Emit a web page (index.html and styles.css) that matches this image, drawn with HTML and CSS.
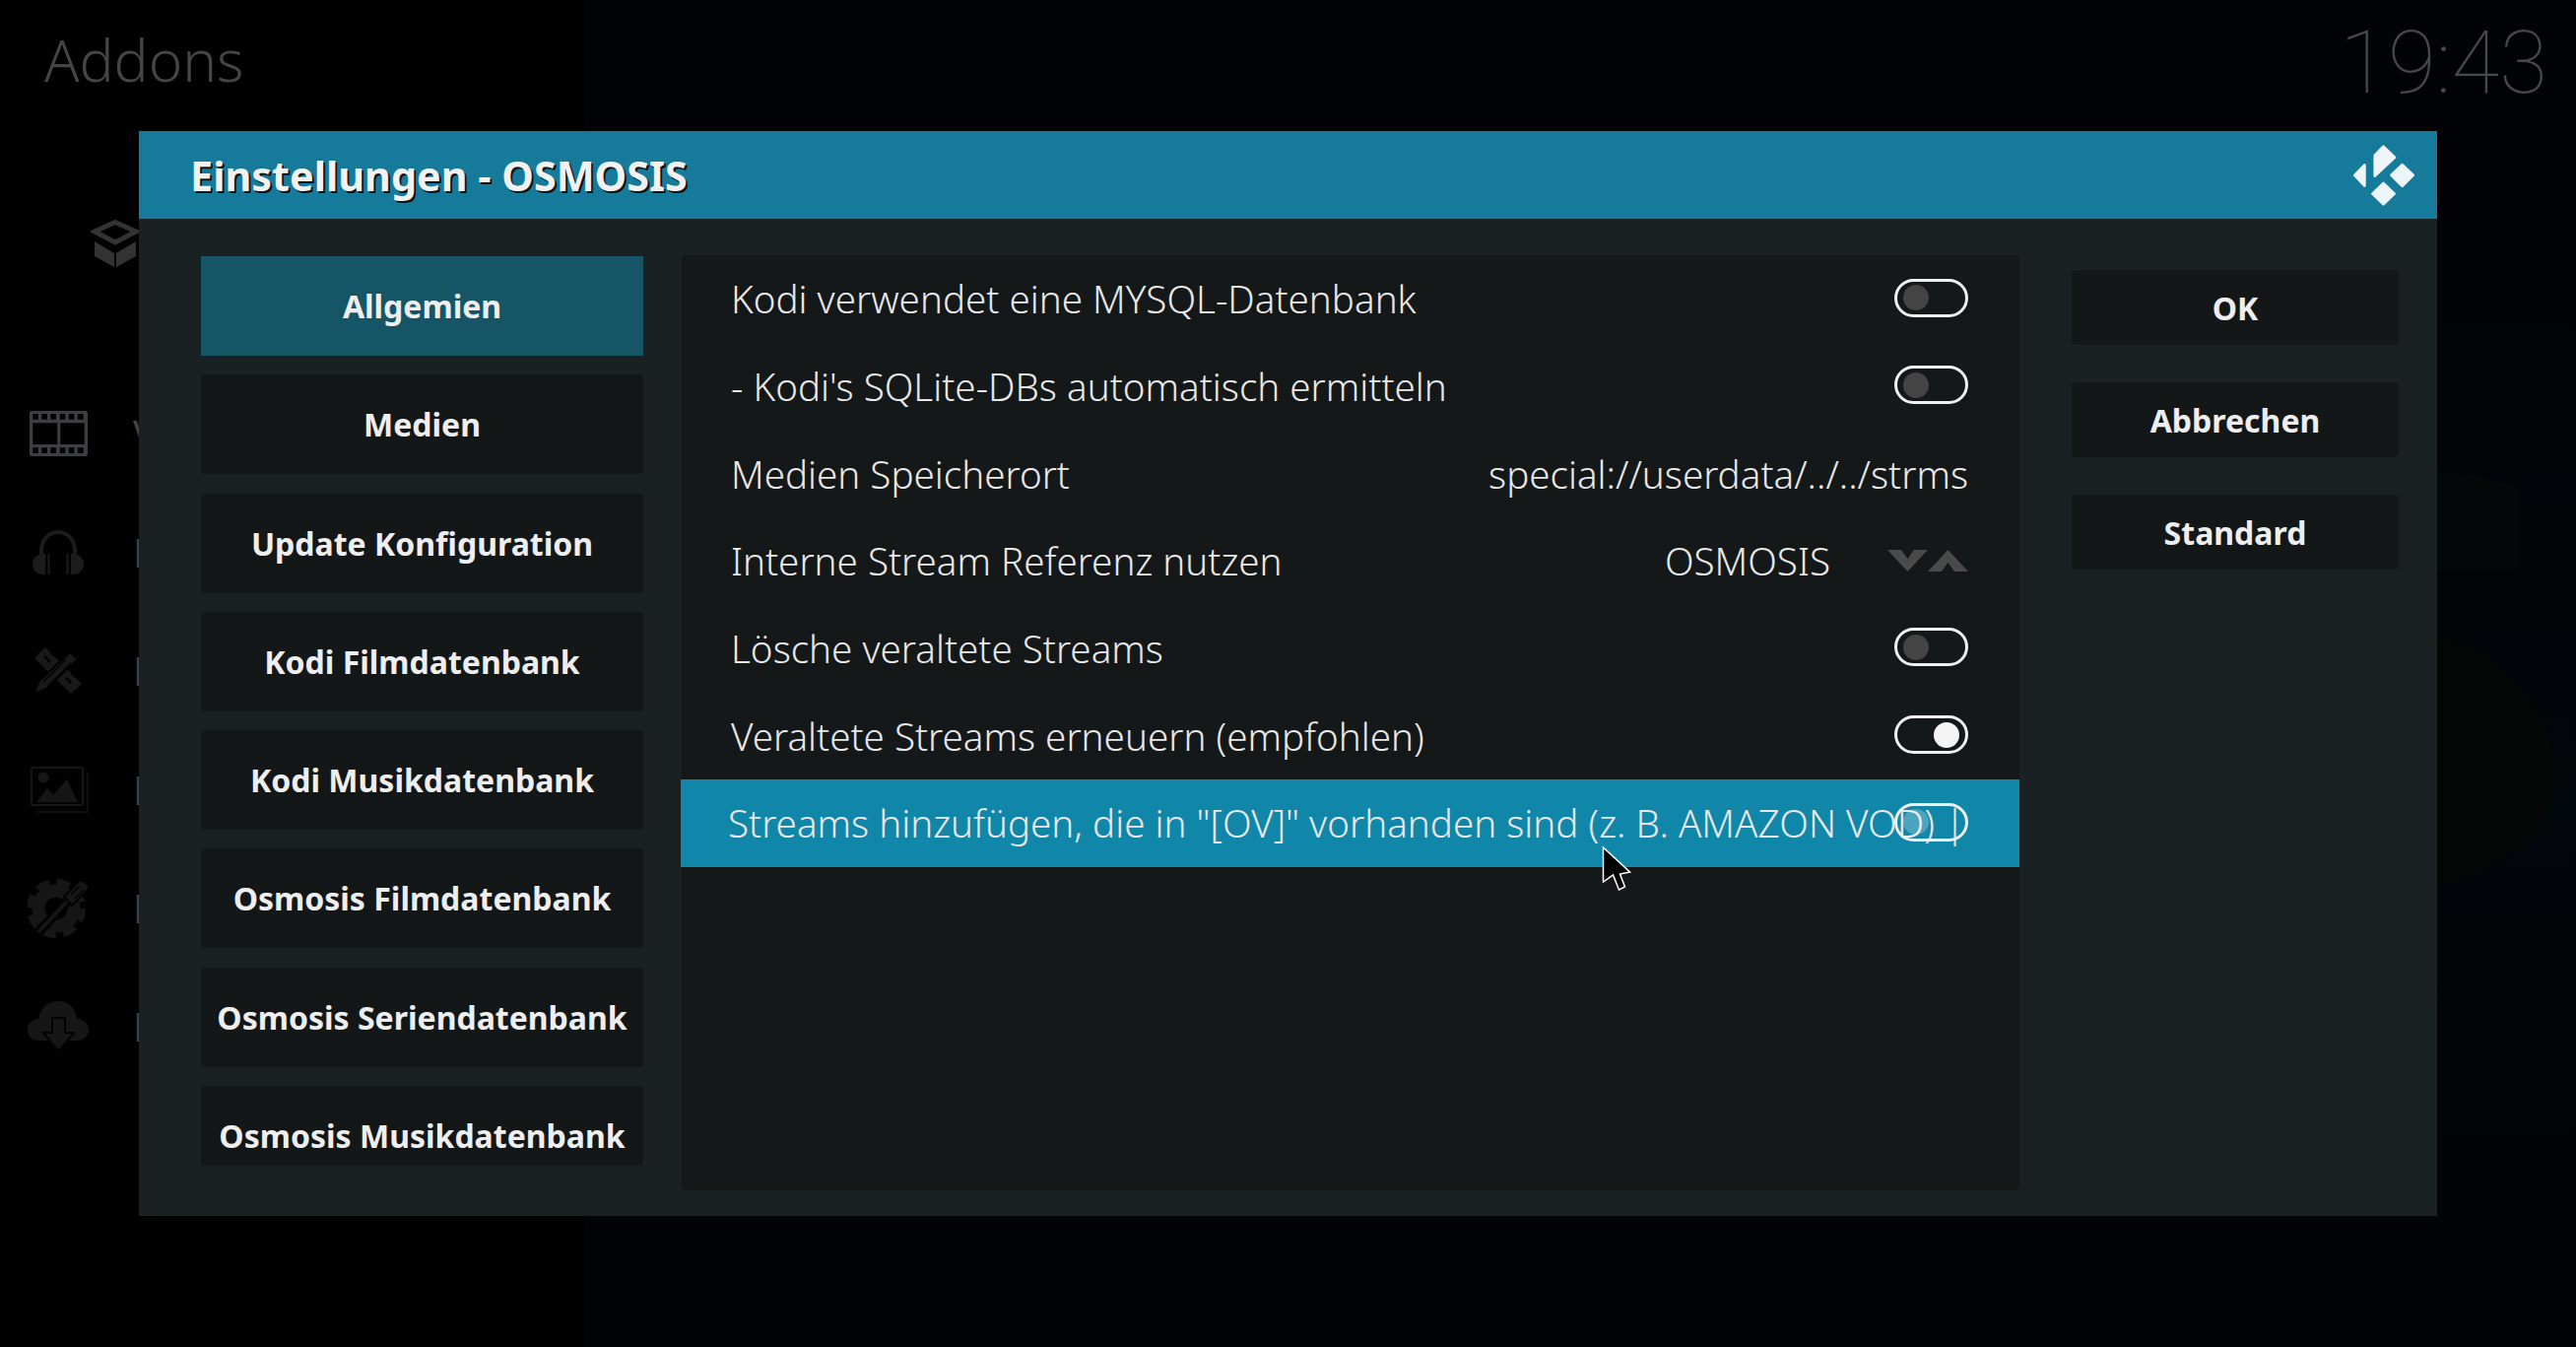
FILE: index.html
```html
<!DOCTYPE html>
<html lang="de">
<head>
    <meta charset="UTF-8">
    <meta name="viewport" content="width=device-width, initial-scale=1.0">
    <title>Einstellungen - OSMOSIS</title>
    <link rel="stylesheet" href="styles.css">
</head>
<body>
    <!-- Dimmed home screen behind the dialog -->
    <div class="home">
        <div class="home-side"></div>
        <div class="home-main">
            <svg class="home-art" width="141" height="520" viewBox="0 0 141 520">
                <path d="M0 0 C30 2 60 8 83 18 V100 H0 Z" fill="#050607"/>
                <path d="M0 170 C50 170 100 220 120 290 C130 340 90 400 0 420 Z" fill="#040505"/>
            </svg>
        </div>
        <div class="home-top">
            <div class="home-title">Addons</div>
            <div class="home-clock">19:43</div>
        </div>
        <svg class="box-icon" width="50" height="49" viewBox="0 0 50 49">
            <path d="M25 2.5 L46 12 L25 23 L4 12 Z" fill="none" stroke="#333" stroke-width="5"/>
            <path d="M4 22 L24 34 V48 L4 37 Z M46 22 L26 34 V48 L46 37 Z" fill="#333"/>
        </svg>
        <div class="home-menu">
            <div class="menu-row">
                <span class="menu-icon">
                    <svg class="icon-film" width="59" height="46" viewBox="0 0 59 46">
                        <path fill-rule="evenodd" fill="#3c3f40" d="M2 0 H57 Q59 0 59 2 V44 Q59 46 57 46 H2 Q0 46 0 44 V2 Q0 0 2 0 Z M3.3 3 V8.7 H9 V3 Z M12.3 3 V8.7 H18 V3 Z M21.3 3 V8.7 H27 V3 Z M30.7 3 V8.7 H36.4 V3 Z M39.7 3 V8.7 H45.4 V3 Z M49 3 V8.7 H54.7 V3 Z M3.3 12.3 V34 H28.3 V12.3 Z M31.3 12.3 V34 H55.7 V12.3 Z M3.3 37.3 V43 H9 V37.3 Z M12.3 37.3 V43 H18 V37.3 Z M21.3 37.3 V43 H27 V37.3 Z M30.7 37.3 V43 H36.4 V37.3 Z M39.7 37.3 V43 H45.4 V37.3 Z M49 37.3 V43 H54.7 V37.3 Z"/>
                    </svg>
                </span>
                <span class="menu-label">V</span>
            </div>
            <div class="menu-row">
                <span class="menu-icon">
                    <svg width="52" height="45" viewBox="0 0 52 45">
                        <path d="M9 28 V20 A17 18 0 0 1 43 20 V28" fill="none" stroke="#1c1c1c" stroke-width="4"/>
                        <path d="M10 24 C4 25 0 29 0 34 C0 40 4 45 11 45 H13 V24 Z M42 24 C48 25 52 29 52 34 C52 40 48 45 41 45 H39 V24 Z M15.5 24 H17.5 V45 H15.5 Z M34.5 24 H36.5 V45 H34.5 Z" fill="#1c1c1c"/>
                    </svg>
                </span>
                <span class="menu-label">M</span>
            </div>
            <div class="menu-row">
                <span class="menu-icon">
                    <svg width="49" height="48" viewBox="0 0 49 48">
                        <path d="M11 0 L48 37 L37 47 L0 11 Z" fill="#191919"/>
                        <path d="M10 9 L16 15 M17 5 L22 10 M32 31 L37 36 M38 26 L42 30" stroke="#020202" stroke-width="2.5"/>
                        <path d="M36 5 L44 12 L12 42 L0 47 L4 35 Z" fill="#191919" stroke="#020202" stroke-width="2"/>
                        <path d="M32 12 L9 35 M37 16 L14 39" stroke="#020202" stroke-width="1.5"/>
                    </svg>
                </span>
                <span class="menu-label">P</span>
            </div>
            <div class="menu-row">
                <span class="menu-icon icon-shift">
                    <svg width="59" height="47" viewBox="0 0 59 47">
                        <rect x="1" y="1" width="52" height="38" rx="1" fill="none" stroke="#161616" stroke-width="2"/>
                        <path d="M7 46 H58 V6" fill="none" stroke="#141414" stroke-width="1.5"/>
                        <circle cx="13" cy="11" r="5.5" fill="#161616"/>
                        <path d="M6 36 L17 22 L23 29 L37 13 L48 36 Z" fill="#161616"/>
                    </svg>
                </span>
                <span class="menu-label">B</span>
            </div>
            <div class="menu-row">
                <span class="menu-icon">
                    <svg width="62" height="61" viewBox="0 0 62 61">
                        <circle cx="29" cy="31" r="18" fill="none" stroke="#161616" stroke-width="13"/>
                        <circle cx="29" cy="31" r="26" fill="none" stroke="#161616" stroke-width="8" stroke-dasharray="13 7.4"/>
                        <path d="M11 55 L40 24" stroke="#030303" stroke-width="10"/>
                        <path d="M11 55 L40 24" stroke="#161616" stroke-width="4"/>
                        <path d="M37 19 L52 3 Q54 2 56 3 L62 8 Q63 10 61 12 L45 28 Z" fill="#161616" stroke="#030303" stroke-width="2"/>
                        <path d="M44 17 L53 8 M48 21 L57 12" stroke="#030303" stroke-width="1.5"/>
                    </svg>
                </span>
                <span class="menu-label">P</span>
            </div>
            <div class="menu-row">
                <span class="menu-icon">
                    <svg width="62" height="52" viewBox="0 0 62 52">
                        <path d="M11 40 C4 40 0 35 0 29 C0 23 5 18 11 18 C13 7 21 0 32 0 C42 0 49 8 50 18 C57 18 62 23 62 29 C62 35 57 40 50 40 Z" fill="#161616"/>
                        <path d="M25 17 H38 V32 H47 L31.5 51 L16 32 H25 Z" fill="#161616" stroke="#030303" stroke-width="2"/>
                    </svg>
                </span>
                <span class="menu-label">D</span>
            </div>
        </div>
    </div>

    <div class="dialog">
        <div class="dialog-header">
            <h1>Einstellungen - OSMOSIS</h1>
            <svg class="kodi-logo" width="62" height="62" viewBox="417 440 185 185">
                <g fill="#eef5f8" stroke="#eef5f8" stroke-width="8" stroke-linejoin="round">
                    <path d="M421 532 L451 501 V564 Z"/>
                    <path d="M482 472 L508 445 L542 478 L482 534 Z"/>
                    <path d="M565 500 L598 532 L565 565 L532 532 Z"/>
                    <path d="M508 556 L541 588 L508 620 L475 588 Z"/>
                </g>
            </svg>
        </div>
        <div class="dialog-body">
            <div class="categories">
                <div class="cat active">Allgemien</div>
                <div class="cat">Medien</div>
                <div class="cat">Update Konfiguration</div>
                <div class="cat">Kodi Filmdatenbank</div>
                <div class="cat">Kodi Musikdatenbank</div>
                <div class="cat">Osmosis Filmdatenbank</div>
                <div class="cat">Osmosis Seriendatenbank</div>
                <div class="cat">Osmosis Musikdatenbank</div>
            </div>
            <div class="settings">
                <div class="row">
                    <span class="row-label">Kodi verwendet eine MYSQL-Datenbank</span>
                    <span class="toggle"></span>
                </div>
                <div class="row">
                    <span class="row-label">- Kodi's SQLite-DBs automatisch ermitteln</span>
                    <span class="toggle"></span>
                </div>
                <div class="row">
                    <span class="row-label">Medien Speicherort</span>
                    <span class="row-value">special://userdata/../../strms</span>
                </div>
                <div class="row">
                    <span class="row-label">Interne Stream Referenz nutzen</span>
                    <span class="row-value">OSMOSIS</span>
                    <svg class="spinner" width="82" height="22" viewBox="0 0 82 22">
                        <path d="M0 0 H14 L20.5 9 L27 0 H41 L20.5 22 Z" fill="#4a4a4a"/>
                        <path d="M41 22 L61.5 0 L82 22 H68 L61.5 13 L55 22 Z" fill="#4a4a4a"/>
                    </svg>
                </div>
                <div class="row">
                    <span class="row-label">Lösche veraltete Streams</span>
                    <span class="toggle"></span>
                </div>
                <div class="row">
                    <span class="row-label">Veraltete Streams erneuern (empfohlen)</span>
                    <span class="toggle on"></span>
                </div>
                <div class="row selected">
                    <span class="row-label">Streams hinzufügen, die in "[OV]" vorhanden sind (z. B. AMAZON VOD) |</span>
                    <span class="toggle"></span>
                </div>
            </div>
            <div class="actions">
                <div class="action">OK</div>
                <div class="action">Abbrechen</div>
                <div class="action">Standard</div>
            </div>
        </div>
    </div>

    <svg class="cursor" width="30" height="46" viewBox="-1.5 -2 30 46">
        <path d="M0 0 L27 25 L17 27 L22 40 L16 43 L10 28 L0 35 Z" fill="#000" stroke="#fff" stroke-width="1.5"/>
    </svg>
</body>
</html>
```

FILE: styles.css
```css
html, body {
    margin: 0;
    padding: 0;
}

body {
    width: 2615px;
    height: 1367px;
    overflow: hidden;
    position: relative;
    background-color: #010204;
    font-family: "Noto Sans", "Open Sans", sans-serif;
}

/* home screen behind the dialog */
.home {
    position: absolute;
    inset: 0;
    overflow: hidden;
}

.home-side {
    position: absolute;
    left: 0;
    top: 0;
    bottom: 0;
    width: 594px;
    background-color: #010101;
}

.home-main {
    position: absolute;
    left: 594px;
    right: 0;
    top: 0;
    bottom: 0;
    background: linear-gradient(#010305, #01060a 60%, #010304);
}

.home-art {
    position: absolute;
    right: 0;
    top: 478px;
}

.home-top {
    position: relative;
    display: flex;
    justify-content: space-between;
    padding: 0 29px 0 45px;
    height: 133px;
}

.home-title {
    font-size: 58.5px;
    font-weight: 300;
    line-height: 120px;
    color: #454545;
}

.home-clock {
    font-family: Roboto, sans-serif;
    font-size: 89px;
    font-weight: 100;
    line-height: 128px;
    color: #484848;
}

.box-icon {
    position: absolute;
    left: 92px;
    top: 223px;
}

.home-menu {
    position: absolute;
    left: 0;
    top: 380px;
}

.menu-row {
    display: flex;
    align-items: center;
    height: 120.3px;
}

.menu-icon {
    width: 118px;
    margin-right: 17px;
    display: flex;
    justify-content: center;
    flex-shrink: 0;
}

.icon-shift {
    padding-left: 3px;
    width: 115px;
}

.menu-label {
    font-size: 40px;
    color: #444;
}

/* dialog */
.dialog {
    position: absolute;
    left: 141px;
    top: 133px;
    width: 2333px;
    height: 1101px;
    background-color: #1a2123;
}

.dialog-header {
    height: 89px;
    background-color: #167b9a;
    display: flex;
    align-items: center;
    justify-content: space-between;
    padding: 0 23px 0 52px;
}

.dialog-header h1 {
    margin: 0;
    font-size: 41.3px;
    font-weight: 700;
    color: #f2f2f2;
    text-shadow: 2px 2px 0 #111;
}

.kodi-logo {
    display: block;
}

.dialog-body {
    display: flex;
    align-items: flex-start;
    padding: 37px 39px 26px 63px;
}

.categories {
    width: 449px;
    height: 923px;
    margin-top: 1px;
    margin-right: 39px;
    overflow: hidden;
    display: flex;
    flex-direction: column;
    gap: 19.3px;
    flex-shrink: 0;
}

.cat {
    height: 101px;
    flex-shrink: 0;
    line-height: 102px;
    text-align: center;
    font-size: 32px;
    font-weight: 700;
    color: #eeeeee;
    background-color: #131718;
    border-radius: 4px;
}

.cat.active {
    background-color: #155565;
    border-radius: 0;
}

.settings {
    width: 1358px;
    height: 949px;
    flex-shrink: 0;
    background-color: #141819;
    border-radius: 4px;
}

.row {
    height: 88.67px;
    display: flex;
    align-items: center;
    padding: 0 52px 0 50px;
    font-size: 38.6px;
    font-weight: 300;
    color: #e8e8e8;
}

.row-label {
    flex: 1;
    width: 0;
    white-space: nowrap;
}

.row-value {
    white-space: nowrap;
}

.spinner {
    margin-left: 58px;
    display: block;
}

.row.selected {
    margin-left: -1.5px;
    padding-left: 48.5px;
    background-color: #1087a8;
}

.toggle {
    position: relative;
    display: block;
    box-sizing: border-box;
    width: 75px;
    height: 39px;
    margin-top: -2px;
    border: 3px solid #f0f0f0;
    border-radius: 20px;
    flex-shrink: 0;
}

.toggle::after {
    content: "";
    position: absolute;
    left: 6px;
    top: 3.5px;
    width: 26px;
    height: 26px;
    border-radius: 50%;
    background-color: #444;
}

.toggle.on::after {
    left: auto;
    right: 6px;
    background-color: #f4f4f4;
}

.row.selected .toggle::after {
    background-color: rgba(255, 255, 255, 0.25);
}

.actions {
    width: 332px;
    margin-left: 53px;
    margin-top: 15px;
    display: flex;
    flex-direction: column;
    gap: 38px;
    flex-shrink: 0;
}

.action {
    height: 76px;
    line-height: 78px;
    text-align: center;
    font-size: 32px;
    font-weight: 700;
    color: #eeeeee;
    background-color: #131718;
    border-radius: 4px;
}

.cursor {
    position: absolute;
    left: 1626px;
    top: 858px;
}
```
